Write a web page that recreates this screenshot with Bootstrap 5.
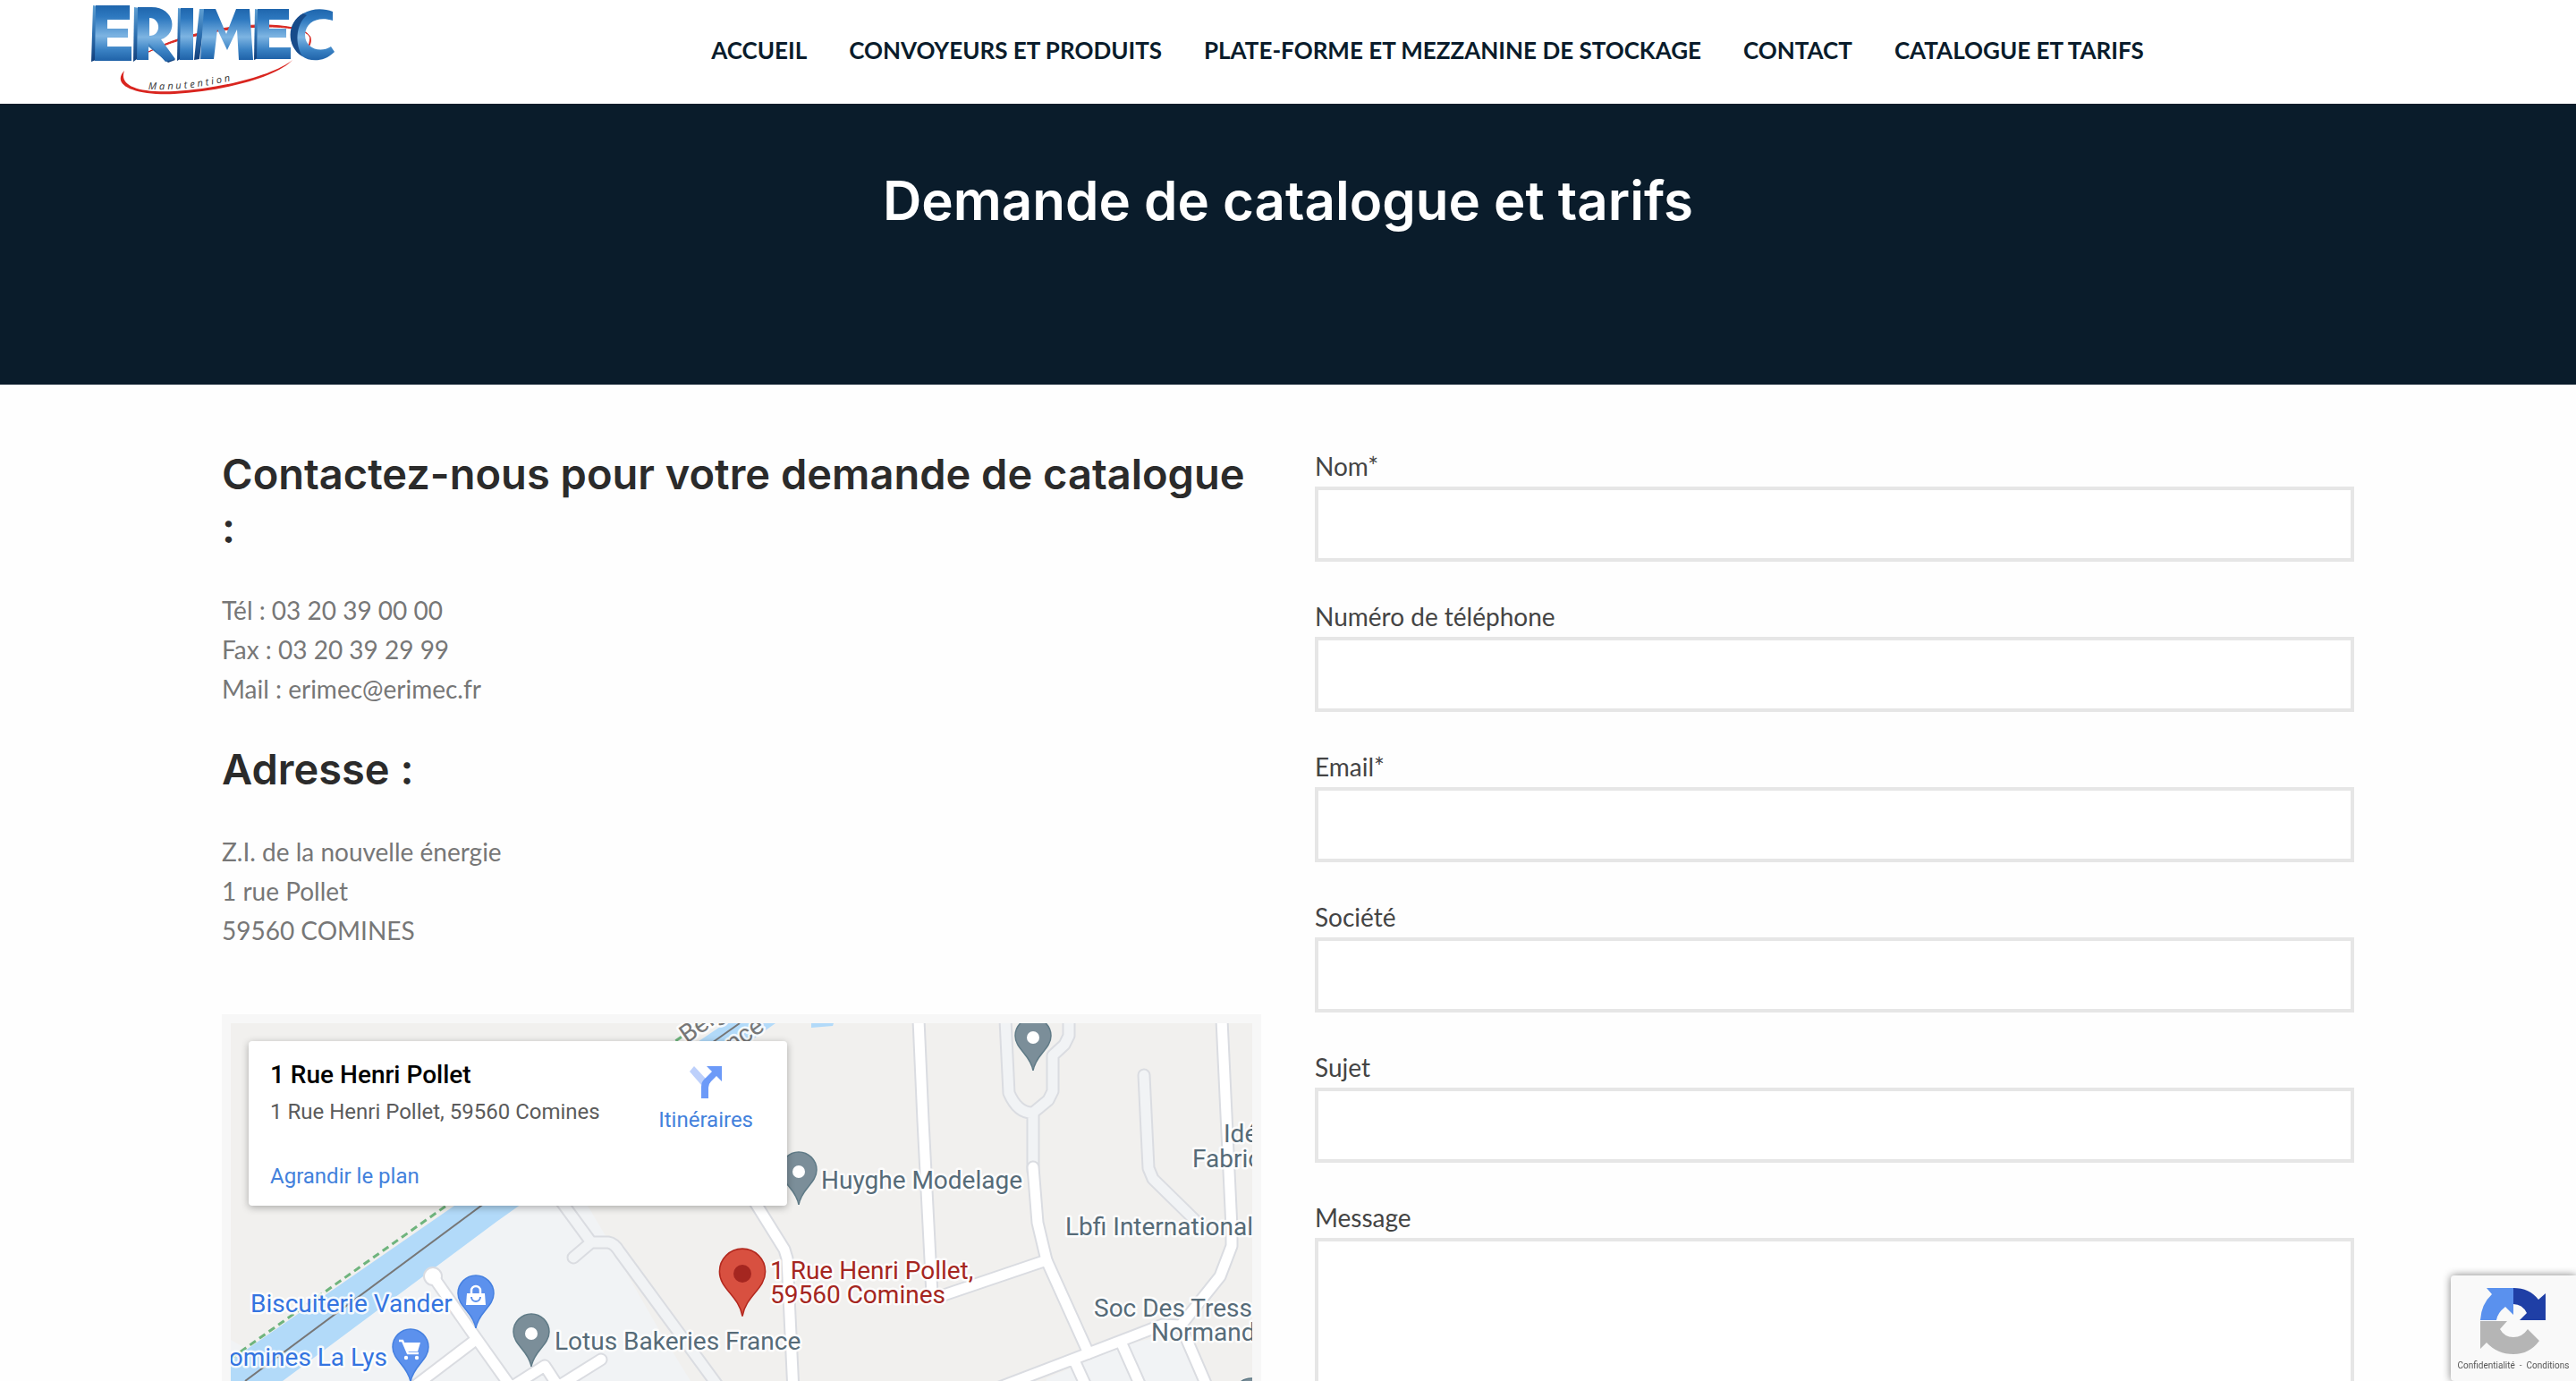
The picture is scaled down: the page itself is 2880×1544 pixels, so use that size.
<!DOCTYPE html>
<html lang="fr">
<head>
<meta charset="utf-8">
<meta name="viewport" content="width=device-width, initial-scale=1">
<title>Demande de catalogue et tarifs</title>
<link href="https://cdn.jsdelivr.net/npm/bootstrap@5.3.0/dist/css/bootstrap.min.css" rel="stylesheet">
<style>
body{font-family:Lato,sans-serif;font-size:28px;line-height:44px;color:#777;background:#fefefe}
.site-head{height:116px;padding:0 64px 0 100px;background:#fff}
.brand-logo{width:276px;height:108px}
.site-nav{gap:47px;font-size:26px;font-weight:700;line-height:40px;margin-bottom:4px}
.site-nav a{color:#0a1c2b;text-decoration:none}
.hero{height:314px;background:#0a1c2b;color:#fff;padding-top:70px}
.hero h1,.sub-title{font-family:Inter,sans-serif;font-weight:600}
.hero h1{font-size:60px;line-height:76px;margin:0}
.page-wrap{max-width:2444px;--bs-gutter-x:60px;padding-top:70px}
.page-wrap>.row{--bs-gutter-x:60px}
.sub-title{font-size:47px;line-height:60px;color:#2b2b2b;margin-bottom:40px}
.info-text{margin-bottom:38px}
.info-last{margin-bottom:72px}
.map-frame{background:#f7f7f7;padding:10px}
.map-frame>svg{display:block;width:100%;height:auto}
.map-card{position:absolute;left:30px;top:30px;width:602px;height:184px;padding:18px 38px 12px 24px;background:#fff;border-radius:4px;box-shadow:0 2px 8px rgba(0,0,0,.3);font-family:Roboto,sans-serif;font-size:24px;line-height:32px;color:#5b5b5b}
.map-card a{color:#4381dc;text-decoration:none}
.place-name{font-size:28px;line-height:40px;font-weight:500;color:#000;margin-bottom:5px}
.place-link{margin-top:40px}
.route-link{padding-top:10px}
.field{margin-bottom:40px}
.field label{display:block;color:#444;line-height:42px;margin-bottom:2px}
.field .form-control{border:4px solid #e6e6e6;border-radius:0;height:84px;font-size:28px;background:#fff}
.field textarea.form-control{height:400px}
.captcha{position:fixed;right:0;bottom:0;width:140px;height:118px;padding-top:13px;background:#f9f9f9;border-radius:4px 0 0 4px;box-shadow:0 0 10px #808080;font-family:Roboto,sans-serif;font-size:10px;line-height:12px}
.captcha a{color:#555;text-decoration:none}
.captcha svg{width:76px;height:76px;margin-bottom:6px}
</style>
<script src="https://cdn.jsdelivr.net/npm/bootstrap@5.3.0/dist/js/bootstrap.bundle.min.js"></script>
</head>
<body class="vh-100 overflow-hidden">
<header class="site-head d-flex align-items-center">
  <a href="#" class="align-self-start" aria-label="Erimec Manutention">
    <svg class="brand-logo d-block" viewBox="100 0 276 108">
      <defs>
        <linearGradient id="blueFace" x1="0" y1="0" x2="0" y2="1"><stop offset="0" stop-color="#1f66ad"/><stop offset=".2" stop-color="#2d78bf"/><stop offset=".55" stop-color="#7db4e2"/><stop offset=".8" stop-color="#3a82c4"/><stop offset="1" stop-color="#1f62a8"/></linearGradient>
        <linearGradient id="blueSide" x1="0" y1="0" x2="0" y2="1"><stop offset="0" stop-color="#5f9fd2"/><stop offset=".5" stop-color="#2c6fb0"/><stop offset="1" stop-color="#123f7a"/></linearGradient>
      </defs>
      <path d="M166 58C210 34 270 27 300 28C345 30 352 40 345 53L347 42C344 34 325 30 300 30C262 30 210 38 166 58Z" fill="#d9251f" stroke="#d9251f"/>
      <path d="M139 79C124 95 150 107 195 105C250 102 310 86 327 67C308 83 250 99 195 102C152 104 133 95 139 79Z" fill="#d9251f"/>
      <g fill="url(#blueSide)">
        <path d="M104 6L110 7V66L102 69Z"/><path d="M150 8L156 9V64L149 69Z"/><path d="M199 9L205 10V64L198 68Z"/><path d="M223 10L230 10L223 66L217 67Z"/><path d="M285 10L291 11V64L284 67Z"/><path d="M156 44L188 70L196 67L176 45Z"/>
      </g>
      <g fill="url(#blueFace)">
        <path d="M107 6H145V22H120V32H143V42H120V52H147V68H106Z"/>
        <path d="M154 8H168C196 7 200 38 180 44L196 66L185 69L166 48V67H153ZM167 20V40C181 40 180 20 167 20Z"/>
        <path d="M202 9H216V67H201Z"/>
        <path d="M228 10H241L253 38L264 10H279L283 67H267L265 33L254 56L243 33L239 66H224Z"/>
        <path d="M288 10H323V22H301V32H320V42H301V53H325V66H287Z"/>
        <path d="M372 13V23C356 18 342 24 341 39C341 54 358 60 370 52L374 58C362 70 346 69 338 63C320 52 321 25 339 15C349 9 362 9 372 13Z"/>
      </g>
      <path d="M339 15C320 25 320 52 338 63C330 50 330 28 343 17Z" fill="#174b8a"/>
      <path id="logoArc" d="M166 100Q215 102 275 86" fill="none"/>
      <text font-family="Open Sans, sans-serif" font-size="11" font-style="italic" fill="#333" letter-spacing="3"><textPath href="#logoArc">Manutention</textPath></text>
    </svg>
  </a>
  <nav class="site-nav d-flex justify-content-center flex-grow-1">
    <a href="#">ACCUEIL</a><a href="#">CONVOYEURS ET PRODUITS</a><a href="#">PLATE-FORME ET MEZZANINE DE STOCKAGE</a><a href="#">CONTACT</a><a href="#">CATALOGUE ET TARIFS</a>
  </nav>
</header>
<section class="hero text-center"><h1>Demande de catalogue et tarifs</h1></section>
<main class="container-fluid page-wrap">
  <div class="row">
    <div class="col-6">
      <h2 class="sub-title">Contactez-nous pour votre demande de catalogue :</h2>
      <p class="info-text">Tél : 03 20 39 00 00<br>Fax : 03 20 39 29 99<br>Mail : erimec@erimec.fr</p>
      <h2 class="sub-title">Adresse :</h2>
      <p class="info-last">Z.I. de la nouvelle énergie<br>1 rue Pollet<br>59560 COMINES</p>
      <div class="map-frame position-relative">
        <svg viewBox="258 1144 1142 700" role="img" aria-label="Plan du quartier">
          <defs>
            <path id="pin" d="M0 38C-3 20 -20 14 -20 -1A20 20 0 0 1 20 -1C20 14 3 20 0 38Z"/>
            <g id="lanes" fill="none" stroke-linecap="round" stroke-linejoin="round">
              <path d="M628 1344L661 1389H680Q687 1390 693 1400L803 1550M661 1389L641 1406"/>
              <path d="M1124 1140L1128 1222Q1138 1245 1155 1244L1172 1230L1177 1220V1180L1190 1168L1195 1158V1140M1155 1244L1155 1310"/>
              <path d="M1279 1202L1284 1306L1289 1318L1342 1370"/>
            </g>
            <g id="streets" fill="none" stroke-linecap="round" stroke-linejoin="round">
              <path d="M484 1427L533 1497L575 1556M533 1497L462 1551M573 1550L609 1527L628 1556M624 1550L672 1520"/>
              <path d="M1027 1140L1032 1253L1042 1447L1055 1448L1170 1409"/>
              <path d="M1155 1305L1160 1367L1170 1409L1217 1513M1366 1140L1377 1373V1393L1364 1427L1320 1482"/>
              <path d="M1115 1552L1217 1513L1300 1481L1320 1482L1352 1556M1253 1500L1278 1556M1201 1521L1217 1556"/>
              <path d="M844 1344L877 1397L880 1407L887 1556"/>
            </g>
          </defs>
          <path fill="#f1f0ee" d="M258 1144H1400V1844H258Z"/>
          <path fill="#f1f3f5" d="M578 1348H657L676 1380L714 1447L737 1487L772 1544L900 1844H258V1560ZM258 1498L272 1506L258 1519ZM1170 1541L1255 1505L1318 1488L1345 1550H1170Z"/>
          <path fill="#b2daf9" d="M811 1144H867L555 1366L316 1544L258 1590V1521L508 1348ZM907 1144H932L931 1147L907 1149Z"/>
          <path fill="none" stroke="#777" stroke-width="2" d="M827 1144L538 1348L274 1544"/>
          <path fill="none" stroke="#6fb47d" stroke-width="3" stroke-dasharray="8 5" d="M783 1144L499 1348L258 1519"/>
          <use href="#lanes" stroke="#dadce1" stroke-width="15"/><use href="#lanes" stroke="#f1f3f5" stroke-width="11"/>
          <use href="#streets" stroke="#dadce1" stroke-width="15"/>
          <circle cx="484" cy="1427" r="10" fill="#fff" stroke="#dadce1" stroke-width="2"/>
          <use href="#streets" stroke="#fff" stroke-width="11"/>
          <g fill="#7b8e99" stroke="#607b87" stroke-width="1.5">
            <use href="#pin" x="594" y="1490"/><use href="#pin" x="893" y="1309"/><use href="#pin" x="1155" y="1159"/><use href="#pin" x="1399" y="1562"/>
          </g>
          <g fill="#fff"><circle cx="594" cy="1491" r="7"/><circle cx="893" cy="1310" r="7"/><circle cx="1155" cy="1160" r="7"/></g>
          <g fill="#5c91ed" stroke="#4680e0" stroke-width="1.5"><use href="#pin" x="532" y="1447"/><use href="#pin" x="459" y="1507"/></g>
          <path fill="#fff" d="M522 1446H542L543 1459H521Z"/><path fill="none" stroke="#fff" stroke-width="2.5" d="M527 1447V1443A5 5 0 0 1 537 1443V1447"/><path fill="none" stroke="#5c91ed" stroke-width="2" d="M527 1450A5 5 0 0 0 537 1450"/>
          <path fill="none" stroke="#fff" stroke-width="2.5" d="M446 1499H450L456 1513H468"/><path fill="#fff" d="M451 1501H470L467 1511H455Z"/><circle cx="454" cy="1518" r="2.2" fill="#fff"/><circle cx="466" cy="1518" r="2.2" fill="#fff"/>
          <use href="#pin" transform="translate(830 1423) scale(1.28)" fill="#d85040" stroke="#b3291f" stroke-width="1.2"/><circle cx="830" cy="1424" r="10" fill="#a52620"/>
          <g font-family="Roboto, sans-serif" font-size="28" stroke="#fff" stroke-opacity=".85" stroke-width="5" stroke-linejoin="round" paint-order="stroke">
            <g fill="#3474e0"><text x="280" y="1467">Biscuiterie Vander</text><text x="433" y="1527" text-anchor="end">Comines La Lys</text></g>
            <g fill="#566b78"><text x="620" y="1509">Lotus Bakeries France</text><text x="918" y="1329">Huyghe Modelage</text><text x="1368" y="1277">Idées</text><text x="1333" y="1305">Fabrication</text><text x="1191" y="1381">Lbfi International</text><text x="1223" y="1472">Soc Des Tresses</text><text x="1287" y="1499">Normandes</text></g>
            <g fill="#a52620"><text x="861" y="1430">1 Rue Henri Pollet,</text><text x="861" y="1457">59560 Comines</text></g>
            <g fill="#777"><text transform="translate(768 1167) rotate(-35)">Belgique</text><text transform="translate(856 1151) rotate(-35)" text-anchor="end">France</text></g>
          </g>
        </svg>
        <div class="map-card d-flex justify-content-between">
          <div><div class="place-name">1 Rue Henri Pollet</div><div>1 Rue Henri Pollet, 59560 Comines</div><div class="place-link"><a href="#">Agrandir le plan</a></div></div>
          <a href="#" class="route-link text-center"><svg class="d-block mx-auto mb-2" width="36" height="36" viewBox="0 0 36 36"><path d="M5 0L19 15L13 21L0 6Z" fill="#bdd0fb"/><path d="M13 36V23Q13 17 18 13L25 6L19 0H36V17L30 11L24 17Q21 20 21 24V36Z" fill="#6c9af8"/></svg>Itinéraires</a>
        </div>
      </div>
    </div>
    <div class="col-6">
      <form>
        <div class="field"><label for="f1">Nom*</label><input class="form-control" id="f1" type="text"></div>
        <div class="field"><label for="f2">Numéro de téléphone</label><input class="form-control" id="f2" type="tel"></div>
        <div class="field"><label for="f3">Email*</label><input class="form-control" id="f3" type="email"></div>
        <div class="field"><label for="f4">Société</label><input class="form-control" id="f4" type="text"></div>
        <div class="field"><label for="f5">Sujet</label><input class="form-control" id="f5" type="text"></div>
        <div class="field"><label for="f6">Message</label><textarea class="form-control" id="f6"></textarea></div>
      </form>
    </div>
  </div>
</main>
<aside class="captcha text-center">
  <svg class="d-block mx-auto" viewBox="0 0 76 76"><path d="M38 1V31L29 22Q20 29 19 37H1Q2 19 14 8L8 1Z" fill="#5a91ee"/><path d="M38 1Q56 1 66 14L74 7V37H45L53 29Q48 19 38 19Z" fill="#1f3fa6"/><path d="M1 38H31L23 47Q28 56 38 56Q48 56 54 47L67 60Q56 75 38 75Q20 75 8 62L1 69Z" fill="#b5b5b5"/></svg>
  <a href="#">Confidentialité</a>&nbsp; - &nbsp;<a href="#">Conditions</a>
</aside>
</body>
</html>
